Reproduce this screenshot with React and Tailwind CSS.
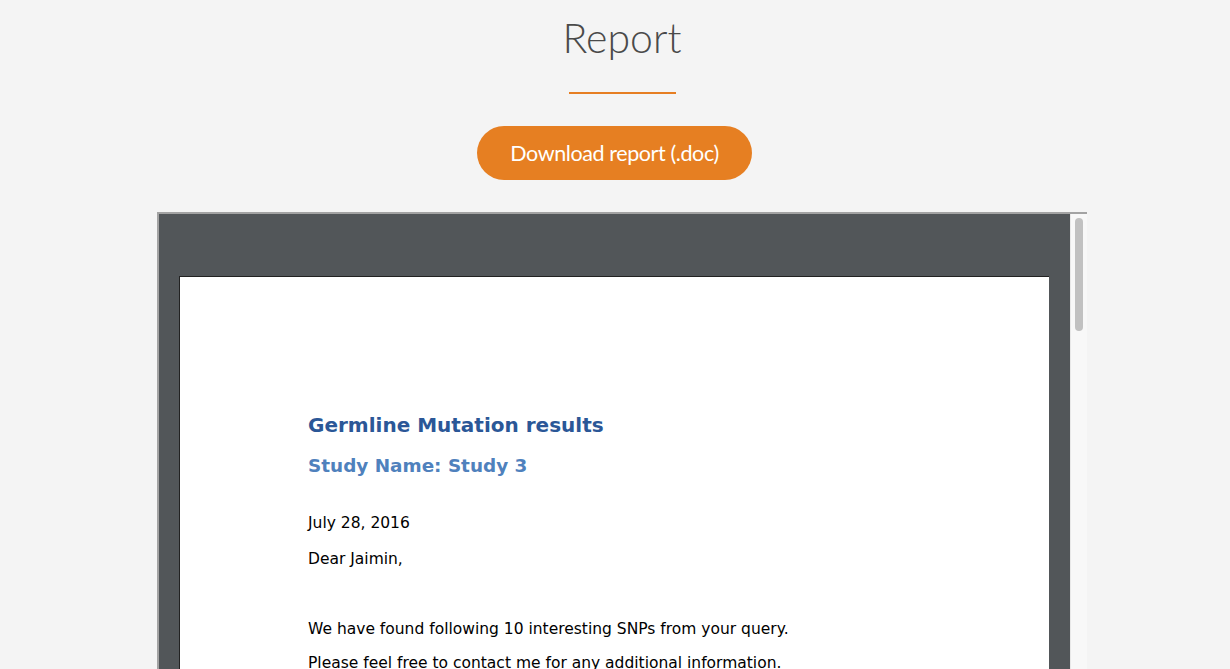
import React from 'react';

const docFont = { fontFamily: '"DejaVu Sans", Verdana, sans-serif' };

const App = () => {
  return (
    <div className="min-h-screen bg-[#f4f4f4] flex flex-col items-center pl-[14px]" style={{ fontFamily: 'Lato, sans-serif' }}>
      {/* Header */}
      <h1 className="mt-[14px] text-[41px] leading-[48px] font-light text-[#4a4a4a]">Report</h1>
      <div className="mt-[30px] w-[107px] h-[2px] bg-[#e67e22]" />

      <button className="mt-[32px] mr-[15px] w-[275px] h-[54px] rounded-full bg-[#e67f22] text-white text-[21.5px] tracking-[-0.4px]">
        Download report (.doc)
      </button>

      {/* Document viewer */}
      <div className="mt-[32px] w-[930px] h-[460px] border-t-2 border-l-2 border-[#a3a3a3] flex">
        <div className="flex-1 bg-[#525659] pt-[62px] pl-[20px] pr-[21px] overflow-hidden">
          <div className="bg-white h-[600px] border-t border-l border-[#222] pl-[128px] pt-[134px]" style={docFont}>
            <h2 className="text-[20px] font-bold text-[#2b5797] leading-[28px]">Germline Mutation results</h2>
            <h3 className="mt-[13px] text-[18.4px] font-bold text-[#4f81bd] leading-[28px]">Study Name: Study 3</h3>
            <p className="mt-[33px] text-[15.5px] text-black leading-[21px]">July 28, 2016</p>
            <p className="mt-[15px] text-[15.5px] text-black leading-[21px]">Dear Jaimin,</p>
            <p className="mt-[49px] text-[15.5px] text-black leading-[21px]">We have found following 10 interesting SNPs from your query.</p>
            <p className="mt-[13px] text-[15.5px] text-black leading-[21px]">Please feel free to contact me for any additional information.</p>
          </div>
        </div>
        {/* scrollbar */}
        <div className="w-[17px] bg-[#f8f8f8] border-l border-[#e8e8e8] flex justify-center pt-[4px]">
          <div className="w-[8px] h-[113px] rounded-full bg-[#c1c1c1]" />
        </div>
      </div>
    </div>
  );
};

export default App;
